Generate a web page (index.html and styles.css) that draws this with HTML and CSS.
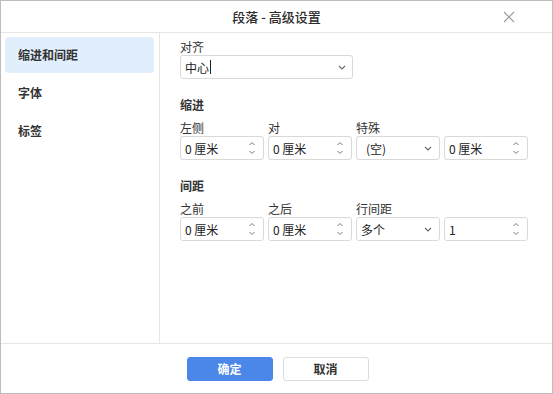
FILE: index.html
```html
<!DOCTYPE html>
<html lang="zh-CN">
<head>
<meta charset="utf-8">
<title>段落 - 高级设置</title>
<link rel="stylesheet" href="styles.css">
</head>
<body>
<div class="dialog">
  <div class="header">
    <div class="title">段落 - 高级设置</div>
    <svg class="close" width="12" height="12" viewBox="0 0 12 12"><path d="M1 1 L11 11 M11 1 L1 11" stroke="#9a9a9a" stroke-width="1.1" fill="none"/></svg>
  </div>
  <div class="body">
    <div class="sidebar">
      <div class="nav-item active">缩进和间距</div>
      <div class="nav-item">字体</div>
      <div class="nav-item">标签</div>
    </div>
    <div class="content">
      <div class="label">对齐</div>
      <div class="field wide">
        <span class="value">中心<span class="caret"></span></span>
        <svg class="chev" width="8" height="5" viewBox="0 0 8 5"><path d="M1 1 L4 4 L7 1" stroke="#666" stroke-width="1.1" fill="none"/></svg>
      </div>

      <div class="heading">缩进</div>
      <div class="row">
        <div class="col">
          <div class="label">左侧</div>
          <div class="field">
            <span class="value">0 厘米</span>
            <svg class="spin" width="8" height="16" viewBox="0 0 8 16"><path d="M1.5 5 L4 2.5 L6.5 5 M1.5 11 L4 13.5 L6.5 11" stroke="#777" stroke-width="1" fill="none"/></svg>
          </div>
        </div>
        <div class="col">
          <div class="label">对</div>
          <div class="field">
            <span class="value">0 厘米</span>
            <svg class="spin" width="8" height="16" viewBox="0 0 8 16"><path d="M1.5 5 L4 2.5 L6.5 5 M1.5 11 L4 13.5 L6.5 11" stroke="#777" stroke-width="1" fill="none"/></svg>
          </div>
        </div>
        <div class="col">
          <div class="label">特殊</div>
          <div class="field">
            <span class="value indent">(空)</span>
            <svg class="chev" width="8" height="5" viewBox="0 0 8 5"><path d="M1 1 L4 4 L7 1" stroke="#666" stroke-width="1.1" fill="none"/></svg>
          </div>
        </div>
        <div class="col">
          <div class="label">&nbsp;</div>
          <div class="field">
            <span class="value">0 厘米</span>
            <svg class="spin" width="8" height="16" viewBox="0 0 8 16"><path d="M1.5 5 L4 2.5 L6.5 5 M1.5 11 L4 13.5 L6.5 11" stroke="#777" stroke-width="1" fill="none"/></svg>
          </div>
        </div>
      </div>

      <div class="heading">间距</div>
      <div class="row">
        <div class="col">
          <div class="label">之前</div>
          <div class="field">
            <span class="value">0 厘米</span>
            <svg class="spin" width="8" height="16" viewBox="0 0 8 16"><path d="M1.5 5 L4 2.5 L6.5 5 M1.5 11 L4 13.5 L6.5 11" stroke="#777" stroke-width="1" fill="none"/></svg>
          </div>
        </div>
        <div class="col">
          <div class="label">之后</div>
          <div class="field">
            <span class="value">0 厘米</span>
            <svg class="spin" width="8" height="16" viewBox="0 0 8 16"><path d="M1.5 5 L4 2.5 L6.5 5 M1.5 11 L4 13.5 L6.5 11" stroke="#777" stroke-width="1" fill="none"/></svg>
          </div>
        </div>
        <div class="col">
          <div class="label">行间距</div>
          <div class="field">
            <span class="value">多个</span>
            <svg class="chev" width="8" height="5" viewBox="0 0 8 5"><path d="M1 1 L4 4 L7 1" stroke="#666" stroke-width="1.1" fill="none"/></svg>
          </div>
        </div>
        <div class="col">
          <div class="label">&nbsp;</div>
          <div class="field">
            <span class="value">1</span>
            <svg class="spin" width="8" height="16" viewBox="0 0 8 16"><path d="M1.5 5 L4 2.5 L6.5 5 M1.5 11 L4 13.5 L6.5 11" stroke="#777" stroke-width="1" fill="none"/></svg>
          </div>
        </div>
      </div>
    </div>
  </div>
  <div class="footer">
    <button class="btn primary">确定</button>
    <button class="btn">取消</button>
  </div>
</div>
</body>
</html>
```

FILE: styles.css
```css
* { box-sizing: border-box; }
html, body { margin: 0; padding: 0; background: #fff; }
body {
  font-family: "Noto Sans CJK SC", "Noto Sans", sans-serif;
  font-size: 12px;
  color: #333;
}
.dialog {
  width: 553px;
  height: 394px;
  border: 1px solid #bdbdbd;
  display: flex;
  flex-direction: column;
}
.header {
  height: 32px;
  flex: none;
  border-bottom: 1px solid #e6e6e6;
  display: flex;
  align-items: center;
  justify-content: center;
  position: relative;
}
.title {
  font-size: 13px;
  font-weight: 500;
  color: #2b2b2b;
  line-height: 16px;
}
.close {
  position: absolute;
  right: 37px;
  top: 10px;
}
.body {
  flex: 1;
  display: flex;
  min-height: 0;
}
.sidebar {
  width: 159px;
  flex: none;
  border-right: 1px solid #e6e6e6;
  padding: 4px 5px 0 4px;
  display: flex;
  flex-direction: column;
  gap: 2px;
}
.nav-item {
  height: 36px;
  line-height: 36px;
  padding-left: 13px;
  font-weight: 700;
  border-radius: 4px;
  color: #333;
}
.nav-item.active { background: #e1eefc; }
.content {
  flex: 1;
  padding: 6px 0 0 20px;
}
.label {
  line-height: 16px;
  height: 16px;
  color: #333;
}
.heading {
  line-height: 16px;
  font-weight: 700;
  margin-top: 18px;
  margin-bottom: 7px;
}
.row {
  display: flex;
  gap: 4px;
}
.col { width: 84px; }
.field {
  height: 24px;
  border: 1px solid #d9d9d9;
  border-radius: 3px;
  display: flex;
  align-items: center;
  justify-content: space-between;
  padding: 0 7px 0 4px;
  background: #fff;
}
.field.wide { width: 173px; padding-right: 6px; }
.value {
  color: #222;
  display: flex;
  align-items: center;
}
.value.indent { padding-left: 5px; }
.caret {
  display: inline-block;
  width: 1px;
  height: 14px;
  background: #222;
  margin-left: 1px;
}
.chev { flex: none; margin-top: 1px; }
.spin { flex: none; }
.footer {
  height: 50px;
  flex: none;
  border-top: 1px solid #e6e6e6;
  display: flex;
  align-items: center;
  justify-content: center;
  gap: 10px;
  padding-left: 2px;
}
.btn {
  width: 86px;
  height: 24px;
  border: 1px solid #dcdcdc;
  border-radius: 3px;
  background: #fff;
  font-family: "Noto Sans CJK SC", "Noto Sans", sans-serif;
  font-size: 12px;
  font-weight: 700;
  color: #333;
  padding: 0;
}
.btn.primary {
  background: #4a87e8;
  border-color: #4a87e8;
  color: #fff;
}
```
